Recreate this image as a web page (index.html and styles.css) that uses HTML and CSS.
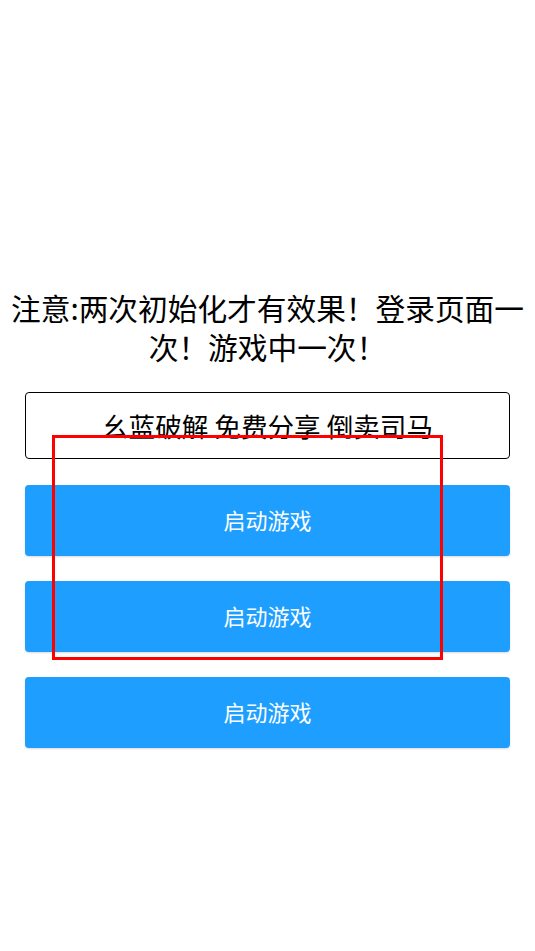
FILE: index.html
```html
<!DOCTYPE html>
<html lang="zh-CN">
<head>
<meta charset="utf-8">
<title>启动游戏</title>
<link rel="stylesheet" href="styles.css">
</head>
<body>
<main class="page">
  <h1 class="notice">注意:两次初始化才有效果！登录页面一次！游戏中一次！</h1>
  <div class="field">幺蓝破解 免费分享 倒卖司马</div>
  <div class="buttons">
    <button class="btn" type="button">启动游戏</button>
    <button class="btn" type="button">启动游戏</button>
    <button class="btn" type="button">启动游戏</button>
  </div>
</main>
<div class="mark"></div>
</body>
</html>
```

FILE: styles.css
```css
html, body {
  margin: 0;
  padding: 0;
  background: #ffffff;
}
body {
  width: 535px;
  height: 951px;
  position: relative;
  overflow: hidden;
  font-family: "Noto Sans CJK SC", "Noto Sans", sans-serif;
}
.page {
  padding: 288px 25px 0 25px;
  display: flex;
  flex-direction: column;
}
.notice {
  margin: 0 -16px;
  font-size: 29.7px;
  line-height: 39px;
  font-weight: 400;
  text-align: center;
  color: #000;
}
.field {
  margin-top: 26px;
  height: 65px;
  border: 1px solid #000;
  border-radius: 4px;
  display: flex;
  align-items: center;
  justify-content: center;
  font-size: 26.6px;
  color: #000;
  box-sizing: content-box;
}
.buttons {
  margin-top: 26px;
  display: flex;
  flex-direction: column;
  gap: 25px;
}
.btn {
  height: 71px;
  border: none;
  border-radius: 4px;
  background: #1e9fff;
  color: #ffffff;
  font-family: "Noto Sans CJK SC", "Noto Sans", sans-serif;
  font-size: 22px;
  box-shadow: 0 1px 2px rgba(0, 0, 0, 0.15);
  padding: 0 0 3px 0;
}
.mark {
  position: absolute;
  left: 52px;
  top: 435px;
  width: 385px;
  height: 219px;
  border: 3px solid #ff0000;
}
```
